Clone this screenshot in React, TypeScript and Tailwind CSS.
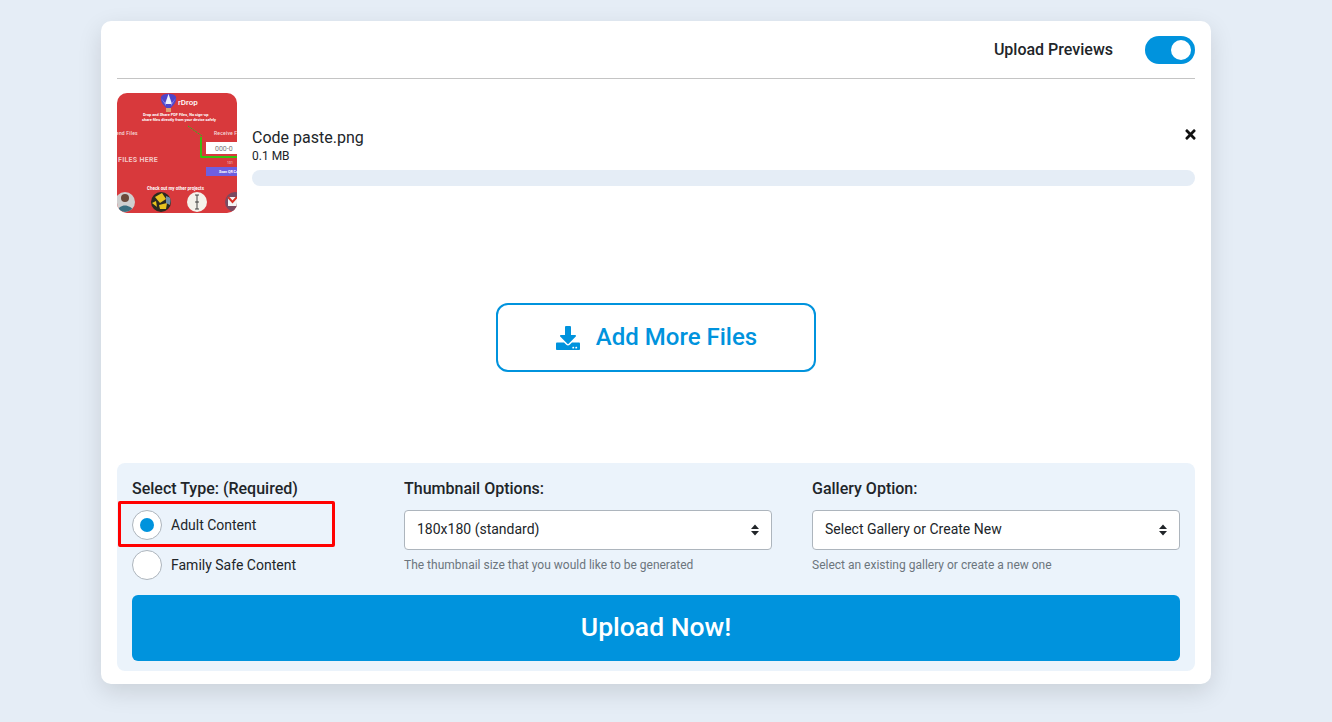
import React from "react";
import { FaDownload, FaTimes } from "react-icons/fa";

function Thumb() {
  return (
    <svg width="120" height="120" viewBox="0 0 120 120" className="block rounded-[10px] shrink-0" style={{ fontFamily: "Roboto, sans-serif" }}>
      <defs>
        <clipPath id="c1"><circle cx="8" cy="109" r="10" /></clipPath>
        <clipPath id="c2"><circle cx="44" cy="109" r="10" /></clipPath>
        <clipPath id="c4"><circle cx="118" cy="109" r="10" /></clipPath>
      </defs>
      <rect width="120" height="120" fill="#d8393c" />
      <path d="M44 4 C45 -0.5 58 -0.5 59 4 C60 9 56 13 53.5 15 L49.5 15 C47 13 43 9 44 4Z" fill="#4f46c8" />
      <path d="M51.5 1 L55 11 L48 11Z" fill="#eef0ff" />
      <path d="M44 5 L49 11 L49 13Z M59 5 L54 11 L54 13Z" fill="#8f8cf0" />
      <rect x="49" y="15" width="5" height="4" fill="#e0a070" />
      <text x="61" y="12" fontSize="8" fill="#fff" fontWeight="500">rDrop</text>
      <text x="26" y="23" fontSize="3.9" fill="#fff" fontWeight="700">Drop and Share PDF Files, No sign-up</text>
      <text x="25" y="27.5" fontSize="3.9" fill="#fff" fontWeight="700">share files directly from your device safely</text>
      <text x="-1" y="42" fontSize="5" fill="#f6dede" fontWeight="500" letterSpacing="0.2">end Files</text>
      <text x="97" y="42" fontSize="5" fill="#f6dede" fontWeight="500" letterSpacing="0.2">Receive Files</text>
      <path d="M71 33 L85 43" stroke="#22c020" strokeWidth="1" strokeDasharray="2 1" fill="none" />
      <path d="M84 44 V64 H120" stroke="#00f000" strokeWidth="1.4" fill="none" />
      <rect x="89" y="49" width="31" height="12" fill="#fff" />
      <text x="98" y="58" fontSize="7" fill="#777">000-0</text>
      <text x="1" y="69" fontSize="7" fill="#f3c6c6" fontWeight="700" letterSpacing="0.3">FILES HERE</text>
      <text x="110" y="71" fontSize="3.5" fill="#f6dede">101</text>
      <rect x="89" y="74" width="31" height="9" fill="#6d5fe0" />
      <text x="102" y="80" fontSize="3.6" fill="#fff" fontWeight="700">Scan QR Code</text>
      <text x="30" y="97" fontSize="4.5" fill="#fff" fontWeight="700">Check out my other projects</text>
      <circle cx="8" cy="109" r="10" fill="#cfcfcf" />
      <g clipPath="url(#c1)">
        <path d="M0 120 C1 110 14 110 18 120Z" fill="#3a6f80" />
        <circle cx="8" cy="105" r="4" fill="#6b4a3a" />
      </g>
      <circle cx="44" cy="109" r="10" fill="#2d2a20" />
      <g clipPath="url(#c2)">
        <path d="M38 104 L45 100 L49 106 L43 110Z M42 112 L50 110 L49 116 L43 116Z M35 110 L39 108 L40 114Z" fill="#e8c320" />
        <path d="M49 103 L54 105 L53 112 L49 110Z" fill="#6f8fa8" />
      </g>
      <circle cx="80" cy="109" r="10" fill="#f5f2ea" />
      <path d="M78 102 H82 M80 102 V116 M78 116 H82 M78 109 H82" stroke="#333" strokeWidth="0.9" fill="none" />
      <circle cx="118" cy="109" r="10" fill="#7a4a60" />
      <g clipPath="url(#c4)">
        <rect x="111" y="104" width="9" height="9" fill="#f4f4f4" />
        <path d="M111 104 L115.5 109 L120 104" stroke="#d93025" strokeWidth="2" fill="none" />
      </g>
    </svg>
  );
}

function Chevrons() {
  return (
    <svg width="8" height="12" viewBox="0 0 8 12" className="shrink-0">
      <path d="M4 0.5 L8 5 H0Z M0 7 H8 L4 11.5Z" fill="#212529" />
    </svg>
  );
}

function Select({ value, help }: { value: string; help: string }) {
  return (
    <div>
      <div className="h-[40px] flex items-center justify-between bg-white border border-[#adb5bd] rounded-[4px] pl-3 pr-[12px] text-[14px] text-[#212529]">
        <span className="mb-[2px]">{value}</span>
        <Chevrons />
      </div>
      <div className="mt-[7px] text-[12px] leading-[16px] text-[#6c757d]">{help}</div>
    </div>
  );
}

function Radio({ checked, label }: { checked?: boolean; label: string }) {
  return (
    <div className="flex items-center h-[30px]">
      <div className="w-[30px] h-[30px] rounded-full bg-white border border-[#adb5bd] flex items-center justify-center shrink-0">
        {checked && <div className="w-[14px] h-[14px] rounded-full bg-[#0093dd]" />}
      </div>
      <span className="ml-[9px] text-[14px] text-[#212529]">{label}</span>
    </div>
  );
}

export default function App() {
  return (
    <div className="min-h-[722px] bg-[#e5edf6] pt-[21px] font-['Roboto',sans-serif] text-[#212529]">
      <div className="ml-[101px] w-[1110px] h-[663px] bg-white rounded-[10px] shadow-[0_8px_24px_rgba(0,0,0,0.12)] px-4 flex flex-col">
        <div className="h-[58px] shrink-0 flex items-center justify-end border-b border-[#c4c4c4] pt-[1px]">
          <span className="text-[16px] font-medium text-[#212529]">Upload Previews</span>
          <div className="ml-[32px] w-[50px] h-[28px] rounded-full bg-[#0093dd] flex items-center justify-end pr-[4px]">
            <div className="w-[20px] h-[20px] rounded-full bg-white" />
          </div>
        </div>

        <div className="mt-[14px] flex h-[120px] shrink-0">
          <Thumb />
          <div className="flex-1 ml-[15px] pt-[34px]">
            <div className="flex justify-between">
              <div className="text-[16px] leading-[21px]">Code paste.png</div>
              <FaTimes size={15} color="#111" className="-mr-[3px] shrink-0" />
            </div>
            <div className="text-[12px] leading-[16px]">0.1 MB</div>
            <div className="mt-[6px] h-[16px] rounded-full bg-[#e5edf6]" />
          </div>
        </div>

        <div className="flex-1 flex items-center justify-center">
          <div className="w-[320px] h-[69px] border-2 border-[#0093dd] rounded-[12px] flex items-center justify-center text-[#0093dd] mb-[1px]">
            <FaDownload size={24} color="#0093dd" className="shrink-0 mr-[16px] ml-[1px]" />
            <span className="text-[24px] font-medium mb-[2px]">Add More Files</span>
          </div>
        </div>

        <div className="h-[208px] shrink-0 mb-[13px] bg-[#ebf3fb] rounded-[8px] px-[15px] pt-[15px] relative">
          <div className="grid grid-cols-[232px_368px_368px] gap-x-[40px]">
            <div>
              <div className="text-[16px] leading-[22px] font-medium h-[32px]">Select Type: (Required)</div>
              <div className="flex flex-col gap-[10px]">
                <Radio checked label="Adult Content" />
                <Radio label="Family Safe Content" />
              </div>
            </div>
            <div>
              <div className="text-[16px] leading-[22px] font-medium h-[32px]">Thumbnail Options:</div>
              <Select value="180x180 (standard)" help="The thumbnail size that you would like to be generated" />
            </div>
            <div>
              <div className="text-[16px] leading-[22px] font-medium h-[32px]">Gallery Option:</div>
              <Select value="Select Gallery or Create New" help="Select an existing gallery or create a new one" />
            </div>
          </div>
          <div className="mt-[15px] h-[66px] rounded-[6px] bg-[#0093dd] text-white text-[26.5px] font-medium flex items-center justify-center pb-[2px]">
            Upload Now!
          </div>
          <div className="absolute left-[1px] top-[38px] w-[217px] h-[46px] border-[3px] border-[#ff0000] rounded-[2px] pointer-events-none" />
        </div>
      </div>
    </div>
  );
}
